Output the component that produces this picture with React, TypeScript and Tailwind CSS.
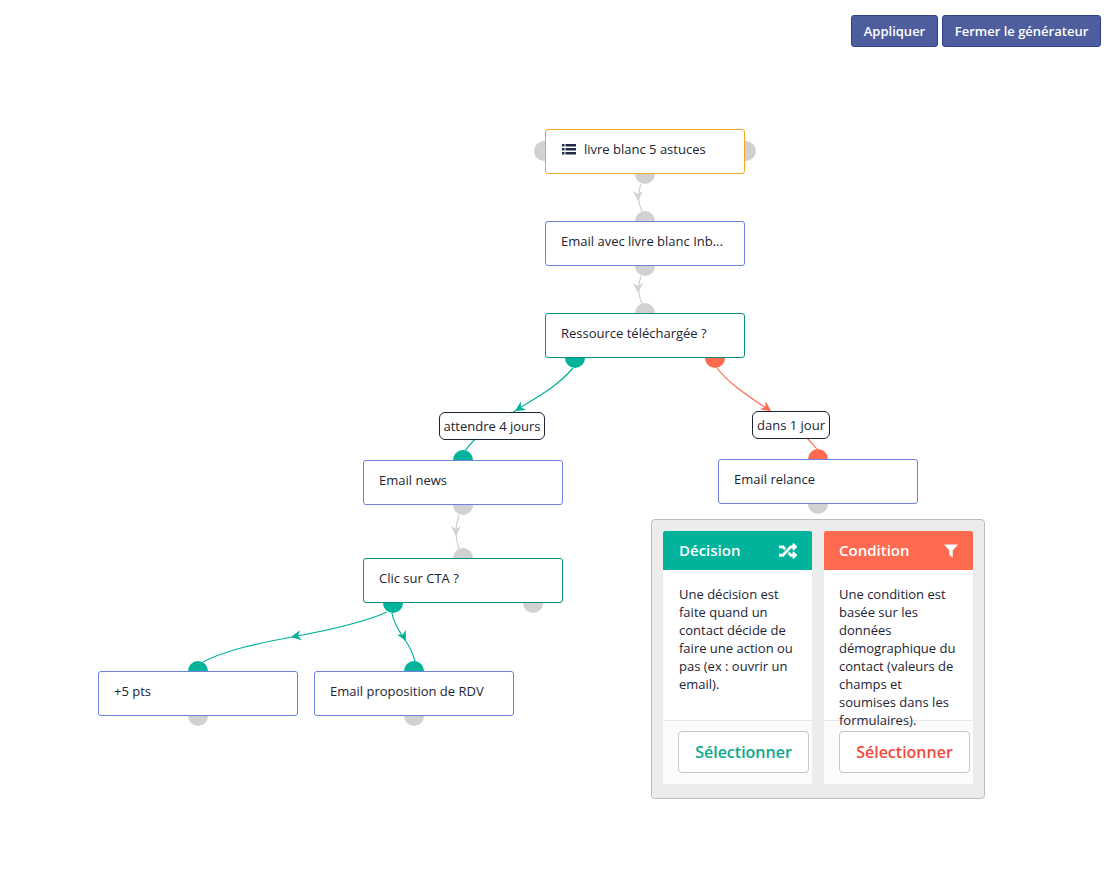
import React from "react";
import { FaRandom } from "react-icons/fa";

const GREEN = "#00b39a";
const RED = "#fd6a50";
const GREY = "#d1d1d1";

function Dot({ x, y, color }: { x: number; y: number; color: string }) {
  return <circle cx={x} cy={y} r={10} fill={color} />;
}

function Node({ x, y, border, children }: { x: number; y: number; border: string; children: React.ReactNode }) {
  return (
    <div
      className={`absolute w-[200px] h-[45px] bg-white border rounded-[3px] pl-[15px] pt-[10px] text-[13px] leading-[18px] text-[#1b2433] ${border}`}
      style={{ left: x, top: y }}
    >
      {children}
    </div>
  );
}

function Label({ x, y, w, children }: { x: number; y: number; w: number; children: React.ReactNode }) {
  return (
    <div
      className="absolute h-[28px] pt-px bg-white/90 border border-[#1b2433] rounded-[6px] flex items-center justify-center text-[13px] text-[#1b2433] whitespace-nowrap"
      style={{ left: x, top: y, width: w }}
    >
      {children}
    </div>
  );
}

function Arrow({ x, y, angle, color }: { x: number; y: number; angle: number; color: string }) {
  return <path d="M0 0 L-10 -5 L-7 0 L-10 5 Z" fill={color} transform={`translate(${x} ${y}) rotate(${angle})`} />;
}

function Card({
  title,
  headerClass,
  textClass,
  icon,
  text,
  btnClass,
}: {
  title: string;
  headerClass: string;
  textClass: string;
  icon: React.ReactNode;
  text: string;
  btnClass: string;
}) {
  return (
    <div className="w-[149px] h-[253px] bg-white flex flex-col rounded-[2px]">
      <div className={`h-[39px] shrink-0 flex items-center justify-between pr-[15px] text-[15px] font-semibold text-white rounded-t-[2px] ${headerClass}`}>
        <span>{title}</span>
        {icon}
      </div>
      <div className={`relative z-10 h-[150px] shrink-0 pr-[12px] pt-[15px] text-[13px] leading-[18px] text-[#1b2433] ${textClass}`}>{text}</div>
      <div className="flex-1 bg-[#fbfbfb] border-t border-[#e6e6ee] pl-[15px] pt-[10px]">
        <div className={`w-[131px] h-[42px] bg-white border border-[#c8c8c8] rounded-[4px] flex items-center justify-center text-[16px] font-semibold ${btnClass}`}>
          Sélectionner
        </div>
      </div>
    </div>
  );
}

export default function App() {
  return (
    <div className="relative w-[1113px] h-[896px] bg-white overflow-hidden font-['Open_Sans',sans-serif]">
      <div className="flex justify-end gap-[4px] pt-[15px] pr-[12px]">
        <button className="h-[32px] w-[87px] pt-px bg-[#4e5d9e] border border-[#2f3f8c] rounded-[3px] text-white text-[13px] font-semibold">Appliquer</button>
        <button className="h-[32px] w-[159px] pt-px bg-[#4e5d9e] border border-[#2f3f8c] rounded-[3px] text-white text-[13px] font-semibold">Fermer le générateur</button>
      </div>

      <svg className="absolute left-0 top-0" width={1113} height={896} fill="none">
        <Dot x={544} y={151} color={GREY} />
        <Dot x={746} y={151} color={GREY} />
        <Dot x={645} y={174} color={GREY} />
        <Dot x={645} y={221} color={GREY} />
        <Dot x={645} y={266} color={GREY} />
        <Dot x={645} y={313} color={GREY} />
        <Dot x={575} y={358} color={GREEN} />
        <Dot x={715} y={358} color={RED} />
        <Dot x={463} y={460} color={GREEN} />
        <Dot x={818} y={459} color={RED} />
        <Dot x={463} y={505} color={GREY} />
        <Dot x={463} y={558} color={GREY} />
        <Dot x={393} y={603} color={GREEN} />
        <Dot x={533} y={603} color={GREY} />
        <Dot x={198} y={671} color={GREEN} />
        <Dot x={414} y={671} color={GREEN} />
        <Dot x={198} y={716} color={GREY} />
        <Dot x={414} y={716} color={GREY} />
        <Dot x={818} y={504} color={GREY} />

        <g strokeWidth={1.2}>
          <path d="M641 184 C 638 192, 637 200, 642 212" stroke={GREY} />
          <Arrow x={638} y={201} angle={90} color={GREY} />
          <path d="M641 276 C 638 284, 637 292, 642 304" stroke={GREY} />
          <Arrow x={638} y={293} angle={90} color={GREY} />
          <path d="M459 515 C 456 523, 454 535, 459 549" stroke={GREY} />
          <Arrow x={456} y={536} angle={90} color={GREY} />

          <path d="M573 368 C 556 388, 535 398, 515 411 C 497 423, 480 430, 465 451" stroke={GREEN} />
          <Arrow x={515} y={411} angle={148} color={GREEN} />
          <path d="M717 368 C 730 385, 750 397, 770 411 C 787 422, 802 430, 817 449" stroke={RED} />
          <Arrow x={771} y={411} angle={35} color={RED} />

          <path d="M387 612 C 365 622, 330 630, 292 637 C 260 643, 225 650, 203 662" stroke={GREEN} />
          <Arrow x={291} y={637} angle={170} color={GREEN} />
          <path d="M392 613 C 394 625, 400 632, 405 640 C 410 647, 413 654, 415 661" stroke={GREEN} />
          <Arrow x={406} y={641} angle={62} color={GREEN} />
        </g>
      </svg>

      <Node x={545} y={129} border="border-[#f5a623]">
        <span className="inline-flex items-center">
          <svg width="14" height="11" viewBox="0 0 14 11" className="ml-px mr-[8px]" fill="#1f2a44">
            <rect x="0" y="0" width="2.5" height="2.5" />
            <rect x="3.5" y="0" width="10.5" height="2.5" />
            <rect x="0" y="4" width="2.5" height="2.5" />
            <rect x="3.5" y="4" width="10.5" height="2.5" />
            <rect x="0" y="8" width="2.5" height="2.5" />
            <rect x="3.5" y="8" width="10.5" height="2.5" />
          </svg>
          <span>livre blanc 5 astuces</span>
        </span>
      </Node>
      <Node x={545} y={221} border="border-[#6f82dc]">Email avec livre blanc Inb...</Node>
      <Node x={545} y={313} border="border-[#0a917c]">Ressource téléchargée ?</Node>
      <Node x={363} y={460} border="border-[#6f82dc]">Email news</Node>
      <Node x={363} y={558} border="border-[#0a917c]">Clic sur CTA ?</Node>
      <Node x={98} y={671} border="border-[#6f82dc]">+5 pts</Node>
      <Node x={314} y={671} border="border-[#6f82dc]">Email proposition de RDV</Node>
      <Node x={718} y={459} border="border-[#6f82dc]">Email relance</Node>

      <Label x={439} y={412} w={106}>attendre 4 jours</Label>
      <Label x={752} y={411} w={78}>dans 1 jour</Label>

      <div className="absolute left-[651px] top-[519px] w-[334px] h-[280px] bg-[#ececec] border border-[#bdbdbd] rounded-[4px] flex gap-[12px] pl-[11px] pt-[11px]">
        <Card
          title="Décision"
          headerClass="pl-[16px] bg-[#00b39a]"
          textClass="pl-[16px]"
          icon={<FaRandom className="text-[18px] text-white" />}
          text="Une décision est faite quand un contact décide de faire une action ou pas (ex : ouvrir un email)."
          btnClass="text-[#0ba88f]"
        />
        <Card
          title="Condition"
          headerClass="pl-[15px] bg-[#fd6a50]"
          textClass="pl-[15px]"
          icon={
            <svg width="14" height="14" viewBox="0 0 14 14" fill="#fff">
              <path d="M0 0.5H14L8.7 6.5V13.5L5.3 11V6.5Z" />
            </svg>
          }
          text="Une condition est basée sur les données démographique du contact (valeurs de champs et soumises dans les formulaires)."
          btnClass="text-[#f5483a]"
        />
      </div>
    </div>
  );
}
